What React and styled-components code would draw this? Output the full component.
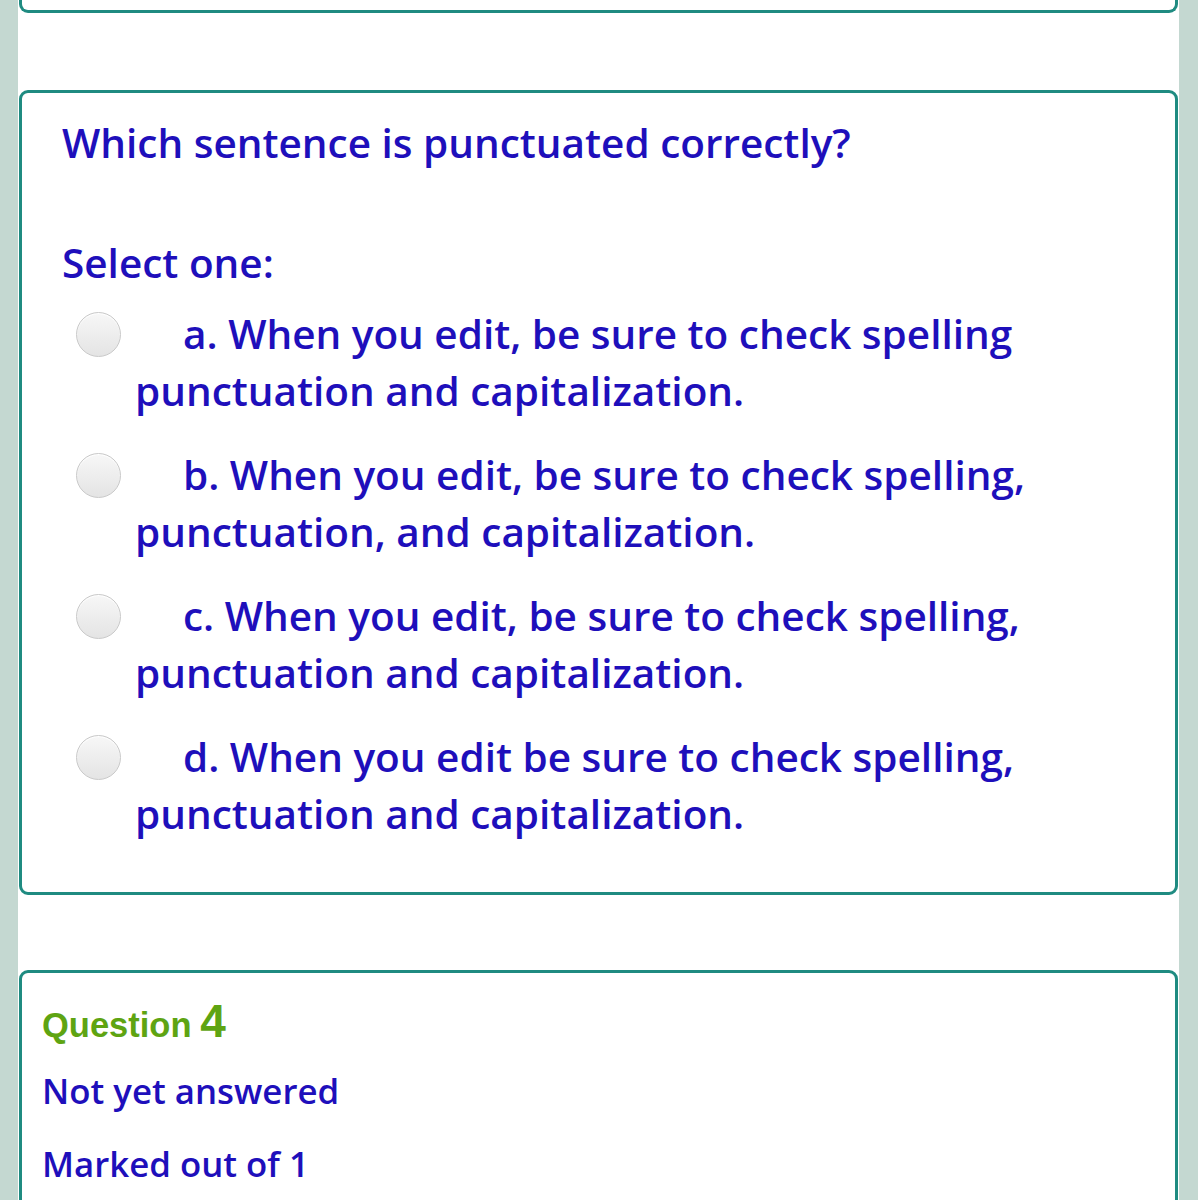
import React from 'react'
import styled, { createGlobalStyle } from 'styled-components'

const Global = createGlobalStyle`
  html, body { margin: 0; padding: 0; }
  body { background: #c4d8d1; font-family: "Open Sans", "Noto Sans", sans-serif; }
`

const Page = styled.div`
  width: 1198px;
  height: 1200px;
  overflow: hidden;
  background: #c4d8d1;
`

const Main = styled.main`
  margin: 0 19px 0 18px;
  background: #ffffff;
  height: 100%;
  padding: 0 1px;
  box-sizing: border-box;
`

const Card = styled.section`
  border: 3px solid #1f8b81;
  border-radius: 9px;
  background: #fff;
  margin-top: ${p => p.$mt || '77px'};
  padding: ${p => p.$pad || '0'};
`

const TailCard = styled.div`
  border: 3px solid #1f8b81;
  border-top: none;
  border-radius: 0 0 9px 9px;
  height: 10px;
`

const Prompt = styled.h2`
  margin: 0;
  font-size: 40.5px;
  font-weight: 600;
  color: #1e0fbb;
  line-height: 52px;
`

const SelectOne = styled.div`
  margin-top: 68px;
  font-size: 40.5px;
  font-weight: 600;
  color: #1e0fbb;
  line-height: 52px;
`

const Options = styled.div`
  display: flex;
  flex-direction: column;
  gap: 27px;
  margin-top: 16px;
`

const OptionRow = styled.label`
  display: flex;
  align-items: flex-start;
`

const Radio = styled.span`
  flex: none;
  width: 43px;
  height: 43px;
  border-radius: 50%;
  border: 1px solid #c9c9c9;
  background: linear-gradient(#f7f7f7, #e4e4e4);
  box-shadow: inset 0 1px 1px #fff;
  margin: 7px 14px 0 14px;
`

const OptionText = styled.span`
  font-size: 40.5px;
  font-weight: 600;
  color: #1e0fbb;
  line-height: 57px;
  text-indent: 48px;
`

const QTitle = styled.div`
  font-family: "Liberation Sans", Arial, sans-serif;
  font-weight: 700;
  color: #5ea412;
  font-size: 34.5px;
  line-height: 50px;
`

const QNum = styled.span`
  font-size: 46px;
  margin-left: -4px;
`

const Info = styled.div`
  font-size: 34.8px;
  font-weight: 600;
  color: #1e0fbb;
  line-height: 46px;
  margin-top: ${p => p.$mt || '0'};
`

const options = [
  ['a.', 'When you edit, be sure to check spelling punctuation and capitalization.'],
  ['b.', 'When you edit, be sure to check spelling, punctuation, and capitalization.'],
  ['c.', 'When you edit, be sure to check spelling, punctuation and capitalization.'],
  ['d.', 'When you edit be sure to check spelling, punctuation and capitalization.'],
]

export default function App() {
  return (
    <Page>
      <Global />
      <Main>
        <TailCard />
        <Card $pad="24px 40px 50px 40px">
          <Prompt>Which sentence is punctuated correctly?</Prompt>
          <SelectOne>Select one:</SelectOne>
          <Options>
            {options.map(([k, t]) => (
              <OptionRow key={k}>
                <Radio />
                <OptionText>{k} {t}</OptionText>
              </OptionRow>
            ))}
          </Options>
        </Card>
        <Card $mt="75px" $pad="23px 20px 40px 20px">
          <QTitle>Question<QNum> 4</QNum></QTitle>
          <Info $mt="18px">Not yet answered</Info>
          <Info $mt="27px">Marked out of 1</Info>
        </Card>
      </Main>
    </Page>
  )
}
